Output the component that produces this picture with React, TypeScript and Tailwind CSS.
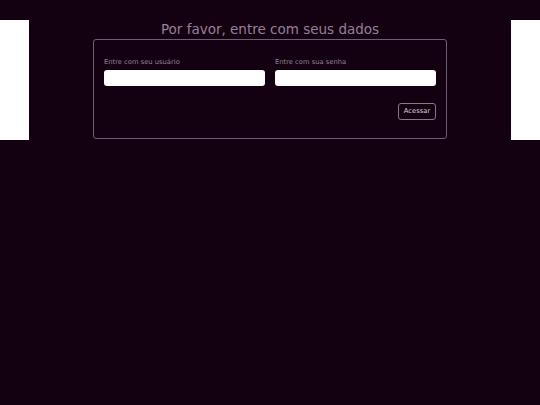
import React from "react";

export default function App() {
  return (
    <div
      className="w-[540px] h-[405px] bg-[#130010] overflow-hidden"
      style={{ fontFamily: '"DejaVu Sans", sans-serif' }}
    >
      <div className="flex pt-[20px]">
        <div className="w-[29px] h-[120px] bg-white shrink-0" />
        <div className="flex-1 flex flex-col items-center">
          <h1 className="text-[13.5px] leading-[19px] text-[#9a7f9a] text-center">
            Por favor, entre com seus dados
          </h1>
          <div className="w-[354px] h-[100px] border border-[#6f5e6f] rounded-[3px] px-[10px] pt-[17px]">
            <div className="grid grid-cols-2 gap-x-[10px]">
              <div className="flex flex-col">
                <label className="text-[6.75px] leading-[10px] text-[#98809a] mb-[3px]">
                  Entre com seu usuário
                </label>
                <input className="h-[16px] bg-white rounded-[3px] outline-none" />
              </div>
              <div className="flex flex-col">
                <label className="text-[6.75px] leading-[10px] text-[#98809a] mb-[3px]">
                  Entre com sua senha
                </label>
                <input type="password" className="h-[16px] bg-white rounded-[3px] outline-none" />
              </div>
            </div>
            <div className="flex justify-end mt-[17px]">
              <button className="h-[17px] w-[38px] border border-[#8a788a] rounded-[3px] text-[6.75px] text-[#ddd2dd] flex items-center justify-center">
                Acessar
              </button>
            </div>
          </div>
        </div>
        <div className="w-[29px] h-[120px] bg-white shrink-0" />
      </div>
    </div>
  );
}
